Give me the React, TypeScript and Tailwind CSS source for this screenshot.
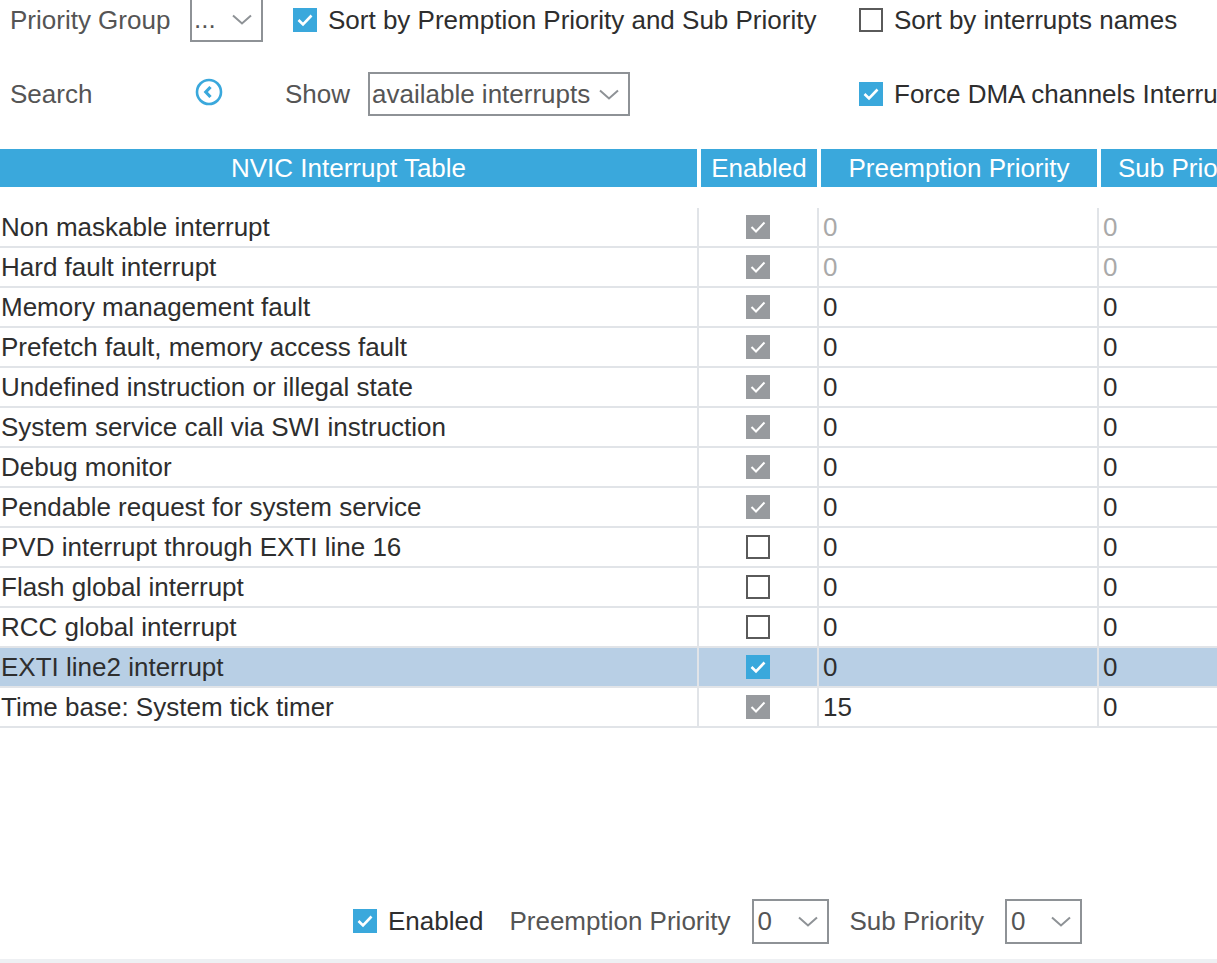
import React from "react";

type CV = "blue" | "gray" | "empty";

function Check({ v }: { v: CV }) {
  if (v === "empty")
    return <div className="w-[24px] h-[24px] shrink-0 border-2 border-[#5a5a5a] bg-white" />;
  return (
    <div
      className={
        v === "blue"
          ? "w-[24px] h-[24px] shrink-0 flex items-center justify-center bg-[#3aa8dc]"
          : "w-[24px] h-[24px] shrink-0 flex items-center justify-center bg-[#979a9e]"
      }
    >
      <svg width="24" height="24" viewBox="0 0 24 24">
        <path d="M5.5 12 L10 16.5 L18.5 7.5" fill="none" stroke="white" strokeWidth={v === "blue" ? 2.6 : 2} />
      </svg>
    </div>
  );
}

function Chevron() {
  return (
    <svg width="20" height="11" viewBox="0 0 20 11" className="shrink-0">
      <path d="M1 1.5 L10 9.5 L19 1.5" fill="none" stroke="#8e9296" strokeWidth="2" />
    </svg>
  );
}

const rows: { name: string; c: CV; p: string; s: string; dim?: boolean; sel?: boolean }[] = [
  { name: "Non maskable interrupt", c: "gray", p: "0", s: "0", dim: true },
  { name: "Hard fault interrupt", c: "gray", p: "0", s: "0", dim: true },
  { name: "Memory management fault", c: "gray", p: "0", s: "0" },
  { name: "Prefetch fault, memory access fault", c: "gray", p: "0", s: "0" },
  { name: "Undefined instruction or illegal state", c: "gray", p: "0", s: "0" },
  { name: "System service call via SWI instruction", c: "gray", p: "0", s: "0" },
  { name: "Debug monitor", c: "gray", p: "0", s: "0" },
  { name: "Pendable request for system service", c: "gray", p: "0", s: "0" },
  { name: "PVD interrupt through EXTI line 16", c: "empty", p: "0", s: "0" },
  { name: "Flash global interrupt", c: "empty", p: "0", s: "0" },
  { name: "RCC global interrupt", c: "empty", p: "0", s: "0" },
  { name: "EXTI line2 interrupt", c: "blue", p: "0", s: "0", sel: true },
  { name: "Time base: System tick timer", c: "gray", p: "15", s: "0" },
];

export default function App() {
  return (
    <div className="w-[1217px] h-[963px] overflow-hidden bg-white flex flex-col font-['Liberation_Sans',Arial,sans-serif] text-[26px] text-[#2e2e2e] whitespace-nowrap">
      <div className="flex-1 flex flex-col">
        {/* Row 1 */}
        <div className="flex items-center h-[40px] shrink-0">
          <div className="w-[190px] shrink-0 pl-[10px] text-[#555555]">Priority Group</div>
          <div className="w-[73px] h-[44px] shrink-0 border-2 border-[#8e9296] flex items-center pl-[2px] pr-[9px] justify-between">
            <span className="text-[#555555] -mt-[2px]">...</span>
            <span className="-mt-[2px]"><Chevron /></span>
          </div>
          <div className="ml-[30px] w-[566px] shrink-0 flex items-center gap-[11px]">
            <Check v="blue" />
            <span>Sort by Premption Priority and Sub Priority</span>
          </div>
          <div className="shrink-0 flex items-center gap-[11px]">
            <Check v="empty" />
            <span>Sort by interrupts names</span>
          </div>
        </div>

        {/* Row 2 */}
        <div className="flex items-center h-[44px] mt-[32px] shrink-0">
          <div className="w-[195px] shrink-0 pl-[10px] text-[#555555]">Search</div>
          <svg width="28" height="28" viewBox="0 0 28 28" className="shrink-0 -mt-[4px]">
            <circle cx="14" cy="14" r="12" fill="none" stroke="#3aa8dc" strokeWidth="2.6" />
            <path d="M15.5 9 L10.8 14 L15.5 19" fill="none" stroke="#3aa8dc" strokeWidth="3.2" />
          </svg>
          <div className="ml-[62px] w-[83px] shrink-0 text-[#555555]">Show</div>
          <div className="w-[262px] h-[44px] shrink-0 border-2 border-[#8e9296] flex items-center pl-[2px] pr-[9px] justify-between">
            <span className="text-[#555555]">available interrupts</span>
            <Chevron />
          </div>
          <div className="ml-[229px] shrink-0 flex items-center gap-[11px]">
            <Check v="blue" />
            <span>Force DMA channels Interrupts</span>
          </div>
        </div>

        {/* Header */}
        <div className="flex gap-[4px] h-[38px] mt-[33px] shrink-0 text-white">
          <div className="w-[697px] shrink-0 bg-[#3aa8dc] flex items-center justify-center">NVIC Interrupt Table</div>
          <div className="w-[116px] shrink-0 bg-[#3aa8dc] flex items-center justify-center">Enabled</div>
          <div className="w-[276px] shrink-0 bg-[#3aa8dc] flex items-center justify-center">Preemption Priority</div>
          <div className="w-[200px] shrink-0 bg-[#3aa8dc] flex items-center pl-[17px]">Sub Priority</div>
        </div>

        {/* Rows */}
        <div className="mt-[21px] flex flex-col">
          {rows.map((r) => (
            <div
              key={r.name}
              className={
                r.sel
                  ? "flex h-[40px] border-b-2 border-[#e1e4e8] bg-[#b8cfe5]"
                  : "flex h-[40px] border-b-2 border-[#e1e4e8]"
              }
            >
              <div className="w-[699px] shrink-0 border-r-2 border-[#e1e4e8] flex items-center pl-[1px]">{r.name}</div>
              <div className="w-[120px] shrink-0 border-r-2 border-[#e1e4e8] flex items-center justify-center">
                <Check v={r.c} />
              </div>
              <div
                className={
                  r.dim
                    ? "w-[280px] shrink-0 border-r-2 border-[#e1e4e8] flex items-center pl-[4px] text-[#a9a9a9]"
                    : "w-[280px] shrink-0 border-r-2 border-[#e1e4e8] flex items-center pl-[4px]"
                }
              >
                {r.p}
              </div>
              <div className={r.dim ? "flex-1 flex items-center pl-[4px] text-[#a9a9a9]" : "flex-1 flex items-center pl-[4px]"}>
                {r.s}
              </div>
            </div>
          ))}
        </div>
      </div>

      {/* Bottom controls */}
      <div className="flex items-center h-[46px] pl-[353px] shrink-0">
        <Check v="blue" />
        <span className="ml-[11px]">Enabled</span>
        <span className="ml-[26px] text-[#555555]">Preemption Priority</span>
        <div className="ml-[21px] w-[77px] h-[45px] shrink-0 border-2 border-[#8e9296] flex items-center pl-[4px] pr-[9px] justify-between">
          <span className="text-[#555555]">0</span>
          <Chevron />
        </div>
        <span className="ml-[21px] text-[#555555]">Sub Priority</span>
        <div className="ml-[21px] w-[77px] h-[45px] shrink-0 border-2 border-[#8e9296] flex items-center pl-[4px] pr-[9px] justify-between">
          <span className="text-[#555555]">0</span>
          <Chevron />
        </div>
      </div>
      <div className="h-[15px] shrink-0" />
      <div className="h-[4px] shrink-0 bg-[#eef0f3]" />
    </div>
  );
}
